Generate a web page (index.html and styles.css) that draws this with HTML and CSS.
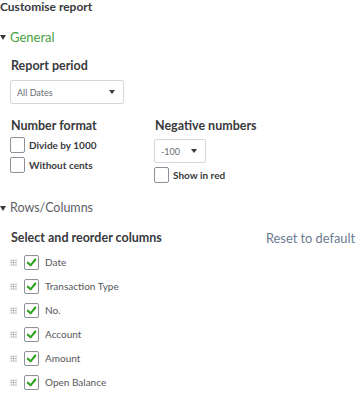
FILE: index.html
```html
<!DOCTYPE html>
<html>
<head>
<meta charset="utf-8">
<link rel="stylesheet" href="styles.css">
</head>
<body>
<div class="panel">
  <div class="title">Customise report</div>

  <div class="section-head green"><span class="caret"></span>General</div>
  <div class="section-body">
    <div class="label">Report period</div>
    <div class="select wide"><span>All Dates</span><span class="arrow"></span></div>

    <div class="two-col">
      <div class="col">
        <div class="label">Number format</div>
        <label class="check"><span class="box"></span><span class="ctext">Divide by 1000</span></label>
        <label class="check"><span class="box"></span><span class="ctext">Without cents</span></label>
      </div>
      <div class="col">
        <div class="label">Negative numbers</div>
        <div class="select narrow"><span>-100</span><span class="arrow"></span></div>
        <label class="check"><span class="box"></span><span class="ctext">Show in red</span></label>
      </div>
    </div>
  </div>

  <div class="section-head gray"><span class="caret"></span>Rows/Columns</div>
  <div class="section-body">
    <div class="cols-head">
      <div class="label">Select and reorder columns</div>
      <div class="reset">Reset to default</div>
    </div>
    <ul class="col-list">
      <li><span class="grip"></span><span class="box checked"><svg viewBox="0 0 14 14"><path d="M3 7.2 L6 10 L11.2 3.8" /></svg></span><span class="item">Date</span></li>
      <li><span class="grip"></span><span class="box checked"><svg viewBox="0 0 14 14"><path d="M3 7.2 L6 10 L11.2 3.8" /></svg></span><span class="item">Transaction Type</span></li>
      <li><span class="grip"></span><span class="box checked"><svg viewBox="0 0 14 14"><path d="M3 7.2 L6 10 L11.2 3.8" /></svg></span><span class="item">No.</span></li>
      <li><span class="grip"></span><span class="box checked"><svg viewBox="0 0 14 14"><path d="M3 7.2 L6 10 L11.2 3.8" /></svg></span><span class="item">Account</span></li>
      <li><span class="grip"></span><span class="box checked"><svg viewBox="0 0 14 14"><path d="M3 7.2 L6 10 L11.2 3.8" /></svg></span><span class="item">Amount</span></li>
      <li><span class="grip"></span><span class="box checked"><svg viewBox="0 0 14 14"><path d="M3 7.2 L6 10 L11.2 3.8" /></svg></span><span class="item">Open Balance</span></li>
    </ul>
  </div>
</div>
</body>
</html>
```

FILE: styles.css
```css
* { box-sizing: border-box; }
html, body { margin: 0; padding: 0; background: #fff; }
body {
  font-family: Lato, "Open Sans", sans-serif;
  color: #393a3d;
  width: 362px;
  height: 400px;
  overflow: hidden;
}
.title {
  font-weight: 700;
  font-size: 12px;
  line-height: 14px;
  color: #393a3d;
}
.section-head {
  display: flex;
  align-items: center;
  font-size: 13px;
  line-height: 16px;
  margin-top: 15px;
}
.section-head.green { color: #47a23f; }
.section-head.gray { color: #5d6065; font-size: 12.5px; margin-top: 17px; }
.caret {
  width: 0; height: 0;
  border-left: 3.5px solid transparent;
  border-right: 3.5px solid transparent;
  border-top: 5px solid #393a3d;
  margin: 0 4px 0 0;
}
.section-body { padding-left: 11px; }
.label {
  font-weight: 700;
  font-size: 12.5px;
  line-height: 16px;
  color: #393a3d;
}
.section-body > .label:first-child { margin-top: 13px; }
.select {
  display: flex;
  align-items: center;
  justify-content: space-between;
  border: 1px solid #d4d7dc;
  border-radius: 2px;
  font-size: 9px;
  color: #6b6c72;
  height: 24px;
  padding: 0 8px 0 6px;
}
.select.wide { width: 114px; margin-top: 6px; margin-left: -1px; }
.select.narrow { width: 52px; margin-top: 5px; margin-left: -1px; margin-bottom: 4px; }
.arrow {
  width: 0; height: 0;
  border-left: 3px solid transparent;
  border-right: 3px solid transparent;
  border-top: 4px solid #393a3d;
}
.two-col { display: flex; margin-top: 14px; }
.col:first-child { width: 144px; }
.col:first-child .label { margin-bottom: 3px; }
.check {
  display: flex;
  align-items: center;
  margin-left: -1px;
}
.check + .check { margin-top: 4px; }
.box {
  width: 15px; height: 16px;
  border: 1px solid #8d9096;
  border-radius: 2px;
  background: #fff;
  flex: none;
  display: flex;
  align-items: center;
  justify-content: center;
}
.ctext {
  font-size: 10px;
  font-weight: 700;
  margin-left: 4px;
  color: #393a3d;
}
.cols-head {
  display: flex;
  justify-content: space-between;
  align-items: center;
  margin-top: 14px;
  padding-right: 7px;
}
.reset {
  font-size: 12.8px;
  color: #6b7a90;
}
.col-list { list-style: none; margin: 4px 0 0 0; padding: 0; }
.col-list li {
  display: flex;
  align-items: center;
  height: 24px;
  margin-left: -1px;
}
.grip {
  width: 7px; height: 7px;
  background-image: radial-gradient(circle, #9a9ca0 0.7px, transparent 0.9px);
  background-size: 2.4px 2.4px;
  margin-right: 7px;
}
.box.checked { width: 15px; height: 15px; }
.box svg { width: 13px; height: 13px; }
.box svg path { fill: none; stroke: #2ca01c; stroke-width: 2.2; stroke-linecap: round; stroke-linejoin: round; }
.item {
  font-size: 10px;
  color: #55575c;
  margin-left: 6px;
}
```
